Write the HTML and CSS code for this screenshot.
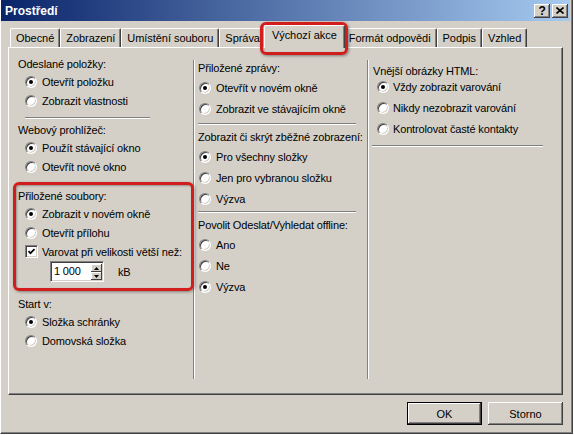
FILE: index.html
```html
<!DOCTYPE html>
<html lang="cs">
<head>
    <meta charset="UTF-8">
    <title>Prostředí</title>
    <link rel="stylesheet" href="styles.css">
</head>
<body>
    <div class="window">
        <div class="titlebar">
            <span class="title">Prostředí</span>
            <div class="caption-buttons">
                <span class="cap-btn help">?</span>
                <span class="cap-btn close">
                    <svg width="8" height="7" viewBox="0 0 8 7"><path d="M0.5 0.5 L7.5 6.5 M7.5 0.5 L0.5 6.5" stroke="#000" stroke-width="1.6"/></svg>
                </span>
            </div>
        </div>

        <div class="dialog">
            <div class="tabs">
                <span class="tab">Obecné</span>
                <span class="tab">Zobrazení</span>
                <span class="tab">Umístění souboru</span>
                <span class="tab">Správa</span>
                <span class="tab active">Výchozí akce</span>
                <span class="tab">Formát odpovědi</span>
                <span class="tab">Podpis</span>
                <span class="tab">Vzhled</span>
            </div>

            <div class="panel">
                <!-- left column -->
                <div class="col col-left">
                    <div class="group-label">Odeslané položky:</div>
                    <div class="opts">
                        <div class="opt"><span class="radio checked"></span>Otevřít položku</div>
                        <div class="opt"><span class="radio"></span>Zobrazit vlastnosti</div>
                    </div>
                    <div class="sep"></div>
                    <div class="group-label">Webový prohlížeč:</div>
                    <div class="opts">
                        <div class="opt"><span class="radio checked"></span>Použít stávající okno</div>
                        <div class="opt"><span class="radio"></span>Otevřít nové okno</div>
                    </div>

                    <div class="group-label spaced">Přiložené soubory:</div>
                    <div class="opts">
                        <div class="opt"><span class="radio checked"></span>Zobrazit v novém okně</div>
                        <div class="opt"><span class="radio"></span>Otevřít přílohu</div>
                        <div class="opt check-opt">
                            <span class="checkbox">
                                <svg width="7" height="7" viewBox="0 0 7 7"><polyline points="0.5,3 2.5,5.2 6.5,1" fill="none" stroke="#000" stroke-width="1.7"/></svg>
                            </span>Varovat při velikosti větší než:
                        </div>
                    </div>
                    <div class="spin-row">
                        <div class="spin">
                            <span class="spin-value">1 000</span>
                            <span class="spin-btns">
                                <span class="spin-btn"><svg width="5" height="3" viewBox="0 0 5 3"><polygon points="2.5,0 5,3 0,3" fill="#000"/></svg></span>
                                <span class="spin-btn"><svg width="5" height="3" viewBox="0 0 5 3"><polygon points="0,0 5,0 2.5,3" fill="#000"/></svg></span>
                            </span>
                        </div>
                        <span class="unit">kB</span>
                    </div>

                    <div class="group-label spaced">Start v:</div>
                    <div class="opts">
                        <div class="opt"><span class="radio checked"></span>Složka schránky</div>
                        <div class="opt"><span class="radio"></span>Domovská složka</div>
                    </div>
                </div>

                <!-- middle column -->
                <div class="col col-mid">
                    <div class="group-label">Přiložené zprávy:</div>
                    <div class="opts">
                        <div class="opt"><span class="radio checked"></span>Otevřít v novém okně</div>
                        <div class="opt"><span class="radio"></span>Zobrazit ve stávajícím okně</div>
                    </div>
                    <div class="sep"></div>
                    <div class="group-label">Zobrazit či skrýt zběžné zobrazení:</div>
                    <div class="opts">
                        <div class="opt"><span class="radio checked"></span>Pro všechny složky</div>
                        <div class="opt"><span class="radio"></span>Jen pro vybranou složku</div>
                        <div class="opt"><span class="radio"></span>Výzva</div>
                    </div>
                    <div class="sep sep-short"></div>
                    <div class="group-label">Povolit Odeslat/Vyhledat offline:</div>
                    <div class="opts">
                        <div class="opt"><span class="radio"></span>Ano</div>
                        <div class="opt"><span class="radio"></span>Ne</div>
                        <div class="opt"><span class="radio checked"></span>Výzva</div>
                    </div>
                </div>

                <!-- right column -->
                <div class="col col-right">
                    <div class="group-label">Vnější obrázky HTML:</div>
                    <div class="opts">
                        <div class="opt"><span class="radio checked"></span>Vždy zobrazit varování</div>
                        <div class="opt"><span class="radio"></span>Nikdy nezobrazit varování</div>
                        <div class="opt"><span class="radio"></span>Kontrolovat časté kontakty</div>
                    </div>
                    <div class="sep"></div>
                </div>
            </div>

            <div class="footer">
                <button class="btn default">OK</button>
                <button class="btn">Storno</button>
            </div>
        </div>

        <!-- red highlight marks drawn over the dialog -->
        <div class="mark mark-tab"></div>
        <div class="mark mark-group"></div>
    </div>
</body>
</html>
```

FILE: styles.css
```css
* {
    box-sizing: border-box;
}

body {
    margin: 0;
    background: #fff;
    font-family: "Liberation Sans", Arial, sans-serif;
    font-size: 11px;
    letter-spacing: -0.15px;
    color: #000;
}

.window {
    position: relative;
    width: 573px;
    height: 434px;
    background: #d4d0c8;
    border-left: 1px solid #fff;
    border-right: 1px solid #404040;
    border-bottom: 1px solid #404040;
    box-shadow: inset -1px -1px #808080;
    display: flex;
    flex-direction: column;
}

/* title bar */
.titlebar {
    height: 21px;
    margin-right: 2px;
    padding: 0 2px 0 4px;
    background: linear-gradient(to right, #0a246a, #a6caf0);
    display: flex;
    align-items: center;
    justify-content: space-between;
}

.title {
    color: #fff;
    font-weight: bold;
    font-size: 12px;
    letter-spacing: 0;
}

.caption-buttons {
    display: flex;
    gap: 2px;
}

.cap-btn {
    width: 16px;
    height: 14px;
    background: #d4d0c8;
    box-shadow: inset -1px -1px #404040, inset 1px 1px #fff, inset -2px -2px #808080;
    display: flex;
    align-items: center;
    justify-content: center;
}

.cap-btn.help {
    font-weight: bold;
    font-size: 12px;
    line-height: 14px;
}

/* dialog body */
.dialog {
    flex: 1;
    padding: 7px 0 0 7px;
}

.tabs {
    display: flex;
    align-items: flex-end;
    height: 19px;
    padding-left: 2px;
}

.tab {
    height: 19px;
    line-height: 18px;
    padding: 0 5px;
    letter-spacing: -0.05px;
    white-space: nowrap;
    background: #d4d0c8;
    border-top: 1px solid #fff;
    border-left: 1px solid #fff;
    border-right: 1px solid #404040;
    border-radius: 2px 2px 0 0;
    box-shadow: inset -1px 0 #808080;
}

.tab.active {
    position: relative;
    z-index: 1;
    height: 23px;
    margin: 0 -2px -1px;
    padding: 0 7px;
}

.panel {
    width: 555px;
    height: 348px;
    display: flex;
    background: #d4d0c8;
    border-top: 1px solid #fff;
    border-left: 1px solid #fff;
    border-right: 1px solid #404040;
    border-bottom: 1px solid #404040;
    box-shadow: inset -1px -1px #808080;
}

.col {
    display: flex;
    flex-direction: column;
    align-items: flex-start;
}

.col-left {
    width: 184px;
    padding: 9px 0 0 9px;
}

.col-mid {
    width: 174px;
    margin: 12px 0 15px;
    padding: 1px 0 0 4px;
    border-left: 1px solid #808080;
    box-shadow: inset 1px 0 #fff;
}

.col-right {
    flex: 1;
    margin: 12px 0 15px;
    padding: 4px 0 0 5px;
    border-left: 1px solid #808080;
    box-shadow: inset 1px 0 #fff;
}

.group-label {
    height: 15px;
    line-height: 15px;
    white-space: nowrap;
}

.group-label.spaced {
    margin-top: 15px;
}

.opts {
    display: flex;
    flex-direction: column;
    gap: 4px;
    margin-top: 2px;
    padding-left: 7px;
}

.col-mid .opts {
    gap: 6px;
    margin-top: 4px;
    padding-left: 1px;
}

.col-right .opts {
    gap: 6px;
    margin-top: 0;
    padding-left: 4px;
}

.opt {
    height: 15px;
    display: flex;
    align-items: center;
    gap: 5px;
    white-space: nowrap;
}

.col-right .opt {
    gap: 4px;
}

.check-opt {
    gap: 4px;
}

.radio {
    position: relative;
    flex: none;
    width: 12px;
    height: 12px;
    border-radius: 50%;
    background: #fff;
    border: 1px solid;
    border-color: #808080 #fff #fff #808080;
    box-shadow: inset 1px 1px #404040, inset -1px -1px #d4d0c8;
}

.radio.checked::after {
    content: "";
    position: absolute;
    left: 3px;
    top: 3px;
    width: 4px;
    height: 4px;
    border-radius: 50%;
    background: #000;
}

.checkbox {
    flex: none;
    width: 13px;
    height: 13px;
    background: #fff;
    border: 1px solid;
    border-color: #808080 #fff #fff #808080;
    box-shadow: inset 1px 1px #404040, inset -1px -1px #d4d0c8;
    display: flex;
    align-items: center;
    justify-content: center;
}

.sep {
    height: 2px;
    border-top: 1px solid #808080;
    border-bottom: 1px solid #fff;
}

.col-left .sep {
    width: 125px;
    margin: 9px 0 4px 7px;
}

.col-mid .sep {
    width: 158px;
    margin: 7px 0 5px;
}

.col-mid .sep-short {
    margin: 5px 0 5px;
}

.col-right .sep {
    width: 171px;
    margin: 9px 0 0 -1px;
}

/* number field with up/down buttons */
.spin-row {
    display: flex;
    align-items: center;
    gap: 14px;
    margin-top: 2px;
    padding-left: 32px;
}

.spin {
    width: 54px;
    height: 21px;
    display: flex;
    background: #fff;
    border: 1px solid;
    border-color: #808080 #fff #fff #808080;
    box-shadow: inset 1px 1px #404040, inset -1px -1px #d4d0c8;
    padding: 2px 1px 1px 2px;
}

.spin-value {
    flex: 1;
    line-height: 15px;
    padding-left: 1px;
}

.spin-btns {
    width: 11px;
    display: flex;
    flex-direction: column;
}

.spin-btn {
    flex: 1;
    background: #d4d0c8;
    box-shadow: inset -1px -1px #404040, inset 1px 1px #fff;
    display: flex;
    align-items: center;
    justify-content: center;
}

/* buttons */
.footer {
    width: 555px;
    display: flex;
    justify-content: flex-end;
    gap: 6px;
    margin-top: 7px;
}

.btn {
    width: 75px;
    height: 23px;
    padding: 0;
    font: inherit;
    color: #000;
    background: #d4d0c8;
    border: none;
    box-shadow: inset -1px -1px #404040, inset 1px 1px #fff, inset -2px -2px #808080;
}

.btn.default {
    border: 1px solid #000;
}

/* red annotation frames */
.mark {
    position: absolute;
    border: 3px solid #d21d1d;
    border-radius: 6px;
    box-shadow: 1px 1px 3px rgba(0, 0, 0, 0.4), inset 1px 1px 2px rgba(0, 0, 0, 0.3);
}

.mark-tab {
    left: 259px;
    top: 22px;
    width: 88px;
    height: 33px;
}

.mark-group {
    left: 12px;
    top: 182px;
    width: 181px;
    height: 109px;
}
```
